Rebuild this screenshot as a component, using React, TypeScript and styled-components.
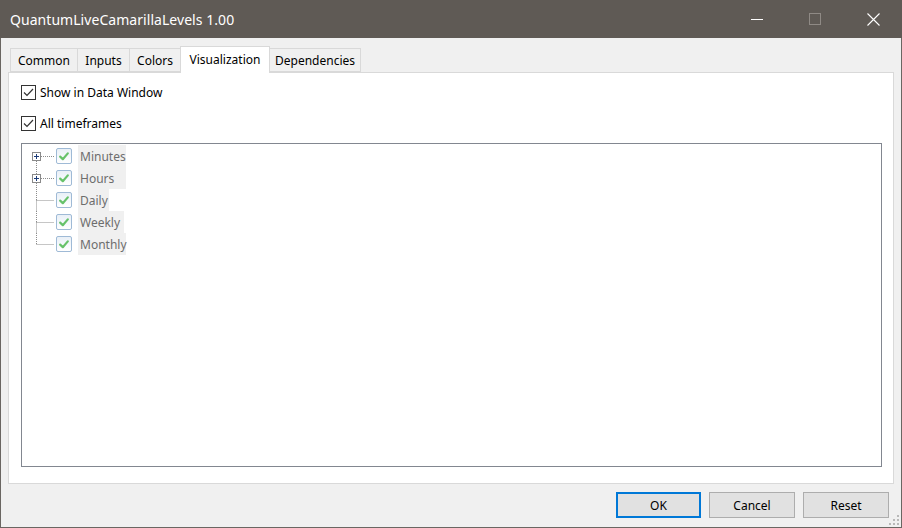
import React from "react";
import styled, { createGlobalStyle } from "styled-components";

const Global = createGlobalStyle`
  html, body { margin: 0; padding: 0; background: #f0f0f0; }
  body { font-family: "Segoe UI", "Noto Sans", "Liberation Sans", sans-serif; }
  * { box-sizing: border-box; }
`;

const Window = styled.div`
  width: 902px;
  height: 528px;
  display: flex;
  flex-direction: column;
  background: #f0f0f0;
  border: 1px solid #6a6662;
  border-top: none;
  position: relative;
`;

const TitleBar = styled.div`
  height: 38px;
  margin: 0 -1px;
  background: #5f5a55;
  display: flex;
  align-items: center;
  padding-left: 10px;
  color: #ffffff;
  font-size: 14px;
  flex-shrink: 0;
`;

const Title = styled.div`
  flex: 1;
  letter-spacing: 0.05px;
`;

const TitleButton = styled.div`
  width: 58px;
  height: 38px;
  display: flex;
  align-items: center;
  justify-content: center;
`;

const Body = styled.div`
  flex: 1;
  display: flex;
  flex-direction: column;
  padding: 8px 7px 0 7px;
`;

const TabStrip = styled.div`
  display: flex;
  align-items: flex-end;
  height: 26px;
  padding-left: 2px;
  position: relative;
  z-index: 1;
`;

const Tab = styled.div<{ $active?: boolean; $w: number }>`
  width: ${(p) => p.$w}px;
  height: ${(p) => (p.$active ? "27px" : "24px")};
  margin-bottom: ${(p) => (p.$active ? "-1px" : "0")};
  display: flex;
  justify-content: center;
  align-items: ${(p) => (p.$active ? "flex-start" : "center")};
  padding-top: ${(p) => (p.$active ? "4px" : "1px")};
  border: 1px solid #d9d9d9;
  border-bottom: ${(p) => (p.$active ? "none" : "1px solid #d9d9d9")};
  margin-left: -1px;
  background: ${(p) => (p.$active ? "#ffffff" : "#f0f0f0")};
  font-size: 12px;
  color: #000;
  white-space: nowrap;
  &:first-child { margin-left: 0; }
`;

const Panel = styled.div`
  height: 412px;
  background: #ffffff;
  border: 1px solid #d9d9d9;
  padding: 12px 11px 16px 12px;
  display: flex;
  flex-direction: column;
`;

const CheckRow = styled.label<{ $gap: number }>`
  display: flex;
  align-items: center;
  height: 15px;
  margin-bottom: ${(p) => p.$gap}px;
  font-size: 12px;
  color: #000;
  gap: 4px;
`;

const Box = styled.span`
  width: 15px;
  height: 15px;
  border: 1px solid #333333;
  background: #fff;
  display: flex;
  align-items: center;
  justify-content: center;
  flex-shrink: 0;
`;

const Tree = styled.div`
  flex: 1;
  border: 1px solid #828790;
  background: #fff;
  padding-top: 1px;
  display: flex;
  flex-direction: column;
`;

const TreeRow = styled.div`
  height: 22px;
  display: flex;
  align-items: center;
`;

const TreeCheck = styled.span`
  width: 16px;
  height: 16px;
  border: 1px solid #9fbad6;
  border-radius: 2px;
  background: linear-gradient(#e9f0f7, #ffffff);
  display: flex;
  align-items: center;
  justify-content: center;
  margin-right: 6px;
  flex-shrink: 0;
`;

const TreeLabel = styled.span<{ $w: number }>`
  height: 22px;
  width: ${(p) => p.$w}px;
  background: #f0f0f0;
  padding-left: 2px;
  display: flex;
  align-items: center;
  font-size: 12px;
  color: #6d6d6d;
`;

const Footer = styled.div`
  height: 43px;
  display: flex;
  justify-content: flex-end;
  align-items: flex-start;
  padding-top: 8px;
  padding-right: 5px;
  gap: 8px;
`;

const Button = styled.div<{ $primary?: boolean; $w: number }>`
  width: ${(p) => p.$w}px;
  height: 26px;
  background: #e1e1e1;
  border: ${(p) => (p.$primary ? "2px solid #0078d7" : "1px solid #adadad")};
  display: flex;
  align-items: center;
  justify-content: center;
  font-size: 12px;
  color: #000;
`;

const Grip = styled.svg`
  position: absolute;
  right: 1px;
  bottom: 1px;
`;

const Check = () => (
  <svg width="11" height="9" viewBox="0 0 11 9">
    <path d="M1 4.5 L4 7.5 L10 1" fill="none" stroke="#333" strokeWidth="1.2" />
  </svg>
);

const GreenCheck = () => (
  <svg width="10" height="9" viewBox="0 0 10 9">
    <path d="M1.2 4.6 L3.8 7.2 L8.8 1.4" fill="none" stroke="#67c26a" strokeWidth="2.2" strokeLinecap="round" strokeLinejoin="round" />
  </svg>
);

type Pos = "first" | "mid" | "last";

const Connector = ({ plus, pos }: { plus: boolean; pos: Pos }) => {
  const x = 14.5;
  const y = 11.5;
  const dot = { stroke: "#8c8c8c", strokeWidth: 1, strokeDasharray: "1 1" };
  return (
    <svg width="34" height="22" viewBox="0 0 34 22" style={{ flexShrink: 0 }}>
      {pos !== "first" && <line x1={x} y1={0} x2={x} y2={plus ? 7 : y} {...dot} />}
      {pos !== "last" && <line x1={x} y1={plus ? 16 : y} x2={x} y2={22} {...dot} />}
      <line x1={plus ? 19 : x} y1={y} x2={32} y2={y} {...dot} />
      {plus && (
        <>
          <rect x={10.5} y={7.5} width={8} height={8} fill="#fff" stroke="#8a8a8a" />
          <line x1={12} y1={y} x2={17} y2={y} stroke="#1d3c78" />
          <line x1={x} y1={9} x2={x} y2={14} stroke="#1d3c78" />
        </>
      )}
    </svg>
  );
};

const items: { name: string; plus: boolean; w: number }[] = [
  { name: "Minutes", plus: true, w: 48 },
  { name: "Hours", plus: true, w: 48 },
  { name: "Daily", plus: false, w: 31 },
  { name: "Weekly", plus: false, w: 46 },
  { name: "Monthly", plus: false, w: 48 },
];

const tabs: { name: string; w: number; active?: boolean }[] = [
  { name: "Common", w: 68 },
  { name: "Inputs", w: 53 },
  { name: "Colors", w: 52 },
  { name: "Visualization", w: 90, active: true },
  { name: "Dependencies", w: 92 },
];

export default function App() {
  return (
    <Window>
      <Global />
      <TitleBar>
        <Title>QuantumLiveCamarillaLevels 1.00</Title>
        <TitleButton>
          <svg width="12" height="12" viewBox="0 0 12 12">
            <line x1="0" y1="6.5" x2="12" y2="6.5" stroke="#fff" />
          </svg>
        </TitleButton>
        <TitleButton>
          <svg width="12" height="12" viewBox="0 0 12 12">
            <rect x="0.5" y="0.5" width="11" height="11" fill="none" stroke="#8f8a85" />
          </svg>
        </TitleButton>
        <TitleButton>
          <svg width="13" height="13" viewBox="0 0 13 13">
            <path d="M0.5 0.5 L12.5 12.5 M12.5 0.5 L0.5 12.5" stroke="#fff" strokeWidth="1.1" />
          </svg>
        </TitleButton>
      </TitleBar>
      <Body>
        <TabStrip>
          {tabs.map((t) => (
            <Tab key={t.name} $w={t.w} $active={t.active}>{t.name}</Tab>
          ))}
        </TabStrip>
        <Panel>
          <CheckRow $gap={16}>
            <Box><Check /></Box>
            Show in Data Window
          </CheckRow>
          <CheckRow $gap={12}>
            <Box><Check /></Box>
            All timeframes
          </CheckRow>
          <Tree>
            {items.map((it, i) => (
              <TreeRow key={it.name}>
                <Connector plus={it.plus} pos={i === 0 ? "first" : i === items.length - 1 ? "last" : "mid"} />
                <TreeCheck><GreenCheck /></TreeCheck>
                <TreeLabel $w={it.w}>{it.name}</TreeLabel>
              </TreeRow>
            ))}
          </Tree>
        </Panel>
        <Footer>
          <Button $primary $w={85}>OK</Button>
          <Button $w={86}>Cancel</Button>
          <Button $w={86}>Reset</Button>
        </Footer>
      </Body>
      <Grip width="12" height="12" viewBox="0 0 12 12">
        {[
          [9, 1], [9, 5], [5, 5], [9, 9], [5, 9], [1, 9],
        ].map(([x, y]) => (
          <rect key={`${x}-${y}`} x={x} y={y} width="2" height="2" fill="#b8b8b8" />
        ))}
      </Grip>
    </Window>
  );
}
